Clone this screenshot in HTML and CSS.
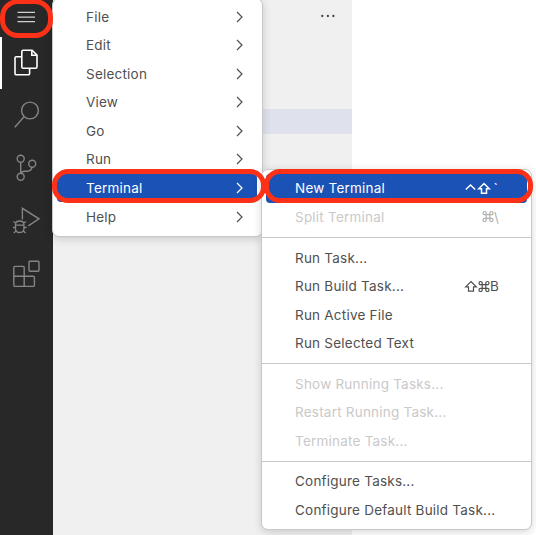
FILE: index.html
```html
<!DOCTYPE html>
<html lang="en">
<head>
<meta charset="utf-8">
<title>Terminal menu</title>
<link rel="stylesheet" href="styles.css">
</head>
<body>
<div class="window">
  <nav class="activity-bar">
    <svg width="53" height="300" viewBox="0 0 53 300" fill="none" stroke="#858585" stroke-width="1.4">
      <path d="M17.5 12.3h17.5M17.5 17.1h17.5M17.5 21.7h17.5" stroke="#d0d0d0" stroke-width="1.2"/>
      <path d="M0 37h2v52H0z" fill="#fff" stroke="none"/>
      <g stroke="#fff" stroke-width="1.6">
        <path d="M23.2 50.3h8.9l4.9 4.9v11.6q0 1.4-1.4 1.4H23.2q-1.4 0-1.4-1.4V51.7q0-1.4 1.4-1.4z"/>
        <path d="M31.8 50.5v4.8h5"/>
        <path d="M21.8 56.7h-5.5q-1.3 0-1.3 1.3v15.4q0 1.4 1.3 1.4h12q1.3 0 1.3-1.4v-5"/>
      </g>
      <circle cx="30" cy="110.5" r="8.4"/>
      <path d="M24 116.7 14.8 127.2"/>
      <circle cx="20.7" cy="158.8" r="3.5"/>
      <circle cx="32.2" cy="163.7" r="3.5"/>
      <circle cx="20.7" cy="176.7" r="3.5"/>
      <path d="M20.7 162.3v10.9M32 167.2q-.7 4-4.5 4h-2.8q-3 0-4 2"/>
      <path d="M22.4 219.5v-11.2L39 218.8l-10.7 7"/>
      <path d="M15.5 224.5q0-3.5 4.2-3.5t4.2 3.5v4q0 4-4.2 4t-4.2-4zM15.5 225.2h8.4M13.6 221.5l2.4 2M25.8 221.5l-2.4 2M13 227.5h2.5M23.9 227.5h2.7M13.8 233l2.5-2.3M25.6 233l-2.5-2.3" stroke-width="1.3"/>
      <rect x="29" y="261.3" width="10" height="10" rx="1"/>
      <path d="M15 266.4h8q1.200 0 1.200 1.200v8.700h9q1.200 0 1.200 1.200v7.700q0 1.200-1.200 1.200H15q-1.200 0-1.200-1.200v-17.600q0-1.200 1.200-1.200zM13.800 276.300h10.400v10.100"/>
    </svg>
  </nav>
  <aside class="sidebar">
    <svg class="more" width="16" height="6" viewBox="0 0 16 6" fill="#424242"><circle cx="2.3" cy="3" r="1.15"/><circle cx="7.9" cy="3" r="1.15"/><circle cx="13.4" cy="3" r="1.15"/></svg>
    <div class="selected-row"></div>
  </aside>
</div>

<div class="menu main-menu">
  <div class="item"><span>File</span><svg class="chevron" viewBox="0 0 7 12"><path d="M1 1l5 5-5 5"/></svg></div>
  <div class="item"><span>Edit</span><svg class="chevron" viewBox="0 0 7 12"><path d="M1 1l5 5-5 5"/></svg></div>
  <div class="item"><span>Selection</span><svg class="chevron" viewBox="0 0 7 12"><path d="M1 1l5 5-5 5"/></svg></div>
  <div class="item"><span>View</span><svg class="chevron" viewBox="0 0 7 12"><path d="M1 1l5 5-5 5"/></svg></div>
  <div class="item"><span>Go</span><svg class="chevron" viewBox="0 0 7 12"><path d="M1 1l5 5-5 5"/></svg></div>
  <div class="item"><span>Run</span><svg class="chevron" viewBox="0 0 7 12"><path d="M1 1l5 5-5 5"/></svg></div>
  <div class="item active"><span>Terminal</span><svg class="chevron" viewBox="0 0 7 12"><path d="M1 1l5 5-5 5"/></svg></div>
  <div class="item"><span>Help</span><svg class="chevron" viewBox="0 0 7 12"><path d="M1 1l5 5-5 5"/></svg></div>
</div>

<div class="menu sub-menu">
  <div class="item active"><span>New Terminal</span><span class="keys"><svg width="12" height="13" viewBox="0 0 12 13"><path d="M.8 7.500l4.700-4.500 4.700 4.500"/></svg><svg width="14" height="13" viewBox="0 0 14 13"><path d="M7 1.500l5.300 5.300H9.500v4.400h-5V6.800H1.700z"/></svg><span class="tick">`</span></span></div>
  <div class="item disabled"><span>Split Terminal</span><span class="keys"><svg width="12" height="13" viewBox="0 0 12 13"><path d="M4.200 4.700V3.100a1.600 1.600 0 1 0-1.600 1.600h6.800a1.600 1.600 0 1 0-1.600-1.600v6.800a1.600 1.600 0 1 0 1.600-1.600H2.600a1.600 1.600 0 1 0 1.600 1.600z"/></svg>\</span></div>
  <div class="separator"></div>
  <div class="item"><span>Run Task...</span></div>
  <div class="item"><span>Run Build Task...</span><span class="keys"><svg width="14" height="13" viewBox="0 0 14 13"><path d="M7 1.500l5.300 5.300H9.500v4.400h-5V6.800H1.700z"/></svg><svg width="12" height="13" viewBox="0 0 12 13"><path d="M4.200 4.700V3.100a1.600 1.600 0 1 0-1.600 1.600h6.800a1.600 1.600 0 1 0-1.600-1.600v6.800a1.600 1.600 0 1 0 1.600-1.600H2.600a1.600 1.600 0 1 0 1.600 1.600z"/></svg>B</span></div>
  <div class="item"><span>Run Active File</span></div>
  <div class="item"><span>Run Selected Text</span></div>
  <div class="separator"></div>
  <div class="item disabled"><span>Show Running Tasks...</span></div>
  <div class="item disabled"><span>Restart Running Task...</span></div>
  <div class="item disabled"><span>Terminate Task...</span></div>
  <div class="separator"></div>
  <div class="item"><span>Configure Tasks...</span></div>
  <div class="item"><span>Configure Default Build Task...</span></div>
</div>

<div class="ring ring-menu"></div>
<div class="ring ring-terminal"></div>
<div class="ring ring-new"></div>
</body>
</html>
```

FILE: styles.css
```css
* { box-sizing: border-box; }
body {
  margin: 0;
  width: 536px;
  height: 535px;
  overflow: hidden;
  position: relative;
  background: #fff;
  font-family: Inter, "Liberation Sans", sans-serif;
  font-size: 13.5px;
  color: #505050;
}
.window { display: flex; height: 535px; }
.activity-bar { width: 53px; background: #282828; }
.activity-bar svg { display: block; }
.sidebar { width: 299px; background: #f0f0f0; }
.more { display: block; margin: 13px 0 0 267px; }
.selected-row { margin-top: 90px; height: 25px; background: #dfe1ed; }
.menu {
  position: absolute;
  background: #fff;
  border: 1px solid #c8c8c8;
  border-radius: 7px;
  box-shadow: 0 2px 8px rgba(0, 0, 0, .16);
}
.main-menu { left: 52px; top: -2px; width: 211px; height: 239px; padding: 3.3px 5px 3.3px 4px; }
.sub-menu { left: 261px; top: 169px; width: 271px; height: 361px; padding: 4.1px 4px 3px; }
.item {
  height: 28.57px;
  display: flex;
  align-items: center;
  justify-content: space-between;
  padding: 0 14px 0 29px;
  border-radius: 4px;
  white-space: nowrap;
  letter-spacing: .22px;
}
.sub-menu .item { padding-right: 28px; }
.active { background: #1b52b6; color: #fff; }
.disabled { color: #c9c9c9; }
.disabled .keys { color: #b2b2b2; }
.separator { height: 12px; margin: 0 -4px; display: flex; align-items: center; }
.separator::before { content: ""; height: 1px; width: 100%; background: #c8c8c8; }
.chevron { width: 7px; height: 12px; }
.chevron path, .keys path { fill: none; stroke: currentColor; stroke-width: 1.2; }
.active .keys path { stroke-width: 1.5; }
.tick { padding: 0 1px 0 2px; }
.keys { display: flex; align-items: center; }
.ring { position: absolute; border: 5px solid #fc3118; }
.ring-menu { left: 0; top: -1px; width: 53px; height: 39px; border-radius: 18px; }
.ring-terminal { left: 52px; top: 169px; width: 214px; height: 34px; border-radius: 16px; }
.ring-new { left: 264px; top: 169px; width: 269px; height: 34px; border-radius: 16px; }
```
